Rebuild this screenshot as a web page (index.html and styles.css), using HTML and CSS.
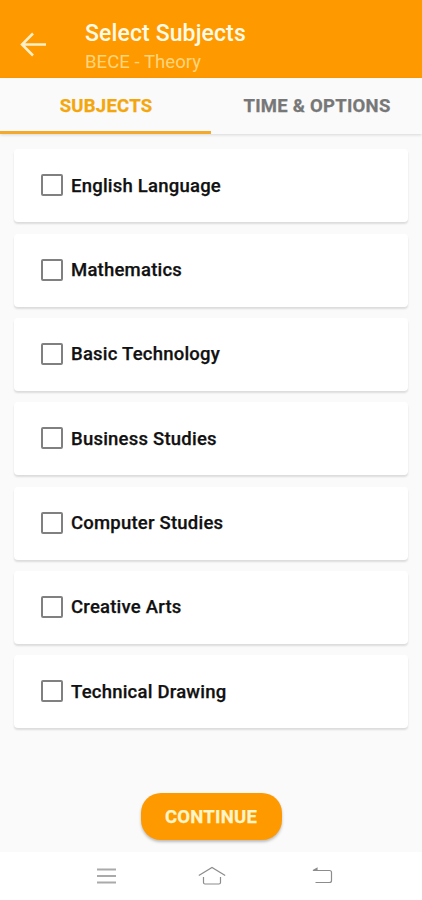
FILE: index.html
```html
<!DOCTYPE html>
<html lang="en">
<head>
<meta charset="utf-8">
<title>Select Subjects</title>
<link rel="stylesheet" href="styles.css">
</head>
<body>
<header class="app-bar">
  <svg class="back" width="28" height="28" viewBox="0 0 28 28"><path d="M27 13.500H3M14 2.500L3 13.500l11 11"/></svg>
  <div class="titles">
    <h1 class="title">Select Subjects</h1>
    <p class="subtitle">BECE - Theory</p>
  </div>
</header>
<nav class="tabs">
  <div class="tab active"><span>SUBJECTS</span></div>
  <div class="tab"><span>TIME &amp; OPTIONS</span></div>
</nav>
<main class="list">
  <label class="card"><span class="box"></span><span class="name">English Language</span></label>
  <label class="card"><span class="box"></span><span class="name">Mathematics</span></label>
  <label class="card"><span class="box"></span><span class="name">Basic Technology</span></label>
  <label class="card"><span class="box"></span><span class="name">Business Studies</span></label>
  <label class="card"><span class="box"></span><span class="name">Computer Studies</span></label>
  <label class="card"><span class="box"></span><span class="name">Creative Arts</span></label>
  <label class="card"><span class="box"></span><span class="name">Technical Drawing</span></label>
</main>
<div class="action"><button class="continue">CONTINUE</button></div>
<footer class="nav-bar">
  <svg class="menu" width="20" height="20" viewBox="0 0 20 20"><path d="M0 3.500h19M0 10h19M0 16.500h19"/></svg>
  <svg width="28" height="20" viewBox="0 0 28 20"><path d="M0.800 9.500L14 1.500l13.200 8M5.500 11v5.500q0 1.500 1.500 1.500h14q1.500 0 1.500-1.500V11"/></svg>
  <svg width="22" height="20" viewBox="0 0 22 20"><path d="M1.500 4.500h16q2 0 2 2v8q0 2-2 2H3.500"/><path class="tip" d="M1 4.500L5 2.300v2.200z"/></svg>
</footer>
</body>
</html>
```
FILE: styles.css
```css
* { box-sizing: border-box; }
body {
  margin: 0;
  width: 422px;
  height: 900px;
  display: flex;
  flex-direction: column;
  overflow: hidden;
  background: #fafafa;
  font-family: Roboto, sans-serif;
}
.app-bar {
  height: 77.500px;
  display: flex;
  align-items: flex-start;
  padding: 20px 0 0 19px;
  background: #ff9900;
}
.back {
  margin-top: 11px;
  fill: none;
  stroke: #fff0c8;
  stroke-width: 2.5;
}
.titles { margin-left: 38px; }
.title {
  margin: 0;
  font-size: 23px;
  line-height: 28px;
  font-weight: 500;
  letter-spacing: .12px;
  color: #fffbe6;
}
.subtitle {
  margin: 0;
  font-size: 18.500px;
  line-height: 28px;
  letter-spacing: .06px;
  color: #ffd57c;
}
.tabs {
  height: 56.500px;
  display: flex;
  box-shadow: 0 1px 3px rgba(0, 0, 0, .14);
}
.tab {
  flex: 1;
  display: flex;
  align-items: center;
  justify-content: center;
  padding: 4px 0 0 1px;
  border-bottom: 3px solid transparent;
  font-size: 18.500px;
  font-weight: 700;
  letter-spacing: .25px;
  -webkit-text-stroke: .25px;
  color: #777;
}
.active {
  color: #f4a60d;
  border-bottom-color: #f5a92a;
}
.list {
  display: flex;
  flex-direction: column;
  gap: 11.3px;
  padding: 15.400px 14px 0;
}
.card {
  height: 73px;
  display: flex;
  align-items: center;
  padding-left: 27px;
  border-radius: 4px;
  background: #fff;
  box-shadow: 0 2px 2px rgba(0, 0, 0, .12);
}
.box {
  width: 22px;
  height: 22px;
  margin-top: -1px;
  border: 2px solid #808080;
  border-radius: 2px;
}
.name {
  margin-left: 8px;
  font-size: 18.500px;
  font-weight: 500;
  letter-spacing: .22px;
  -webkit-text-stroke: .25px;
  color: #111;
}
.action {
  flex: 1;
  display: flex;
  align-items: flex-end;
  justify-content: center;
  padding-bottom: 12px;
}
.continue {
  width: 141px;
  height: 47px;
  padding: 0;
  border: 0;
  border-radius: 20px;
  background: #ff9900;
  box-shadow: 0 2px 3px rgba(0, 0, 0, .25);
  font: 700 18.500px Roboto, sans-serif;
  letter-spacing: .25px;
  -webkit-text-stroke: .25px;
  color: #fff5c8;
}
.nav-bar {
  height: 48px;
  display: flex;
  gap: 86px;
  padding: 14px 0 0 97px;
  background: #fff;
}
.nav-bar svg {
  fill: none;
  stroke: #8c8c8c;
  stroke-width: 1.2;
}
.nav-bar svg:nth-child(2) { margin-left: -5px; }
.nav-bar .menu {
  stroke: #aaa;
  stroke-width: 2;
}
.nav-bar .tip { fill: #8c8c8c; }
```
